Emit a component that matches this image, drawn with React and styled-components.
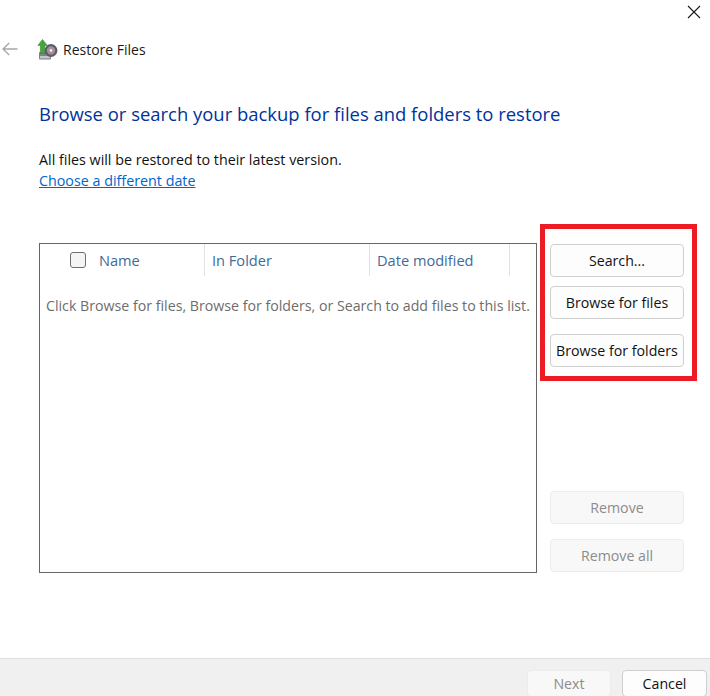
import React from "react";
import styled, { createGlobalStyle } from "styled-components";

const Global = createGlobalStyle`
  html, body { margin: 0; padding: 0; background: #fff; }
  body { font-family: "Open Sans", "Noto Sans", "Liberation Sans", sans-serif; }
`;

const Dialog = styled.div`
  width: 710px;
  height: 696px;
  display: flex;
  flex-direction: column;
  overflow: hidden;
  background: #fff;
  position: relative;
`;

const CloseButton = styled.div`
  position: absolute;
  top: 5px;
  right: 9px;
  width: 14px;
  height: 14px;
  display: flex;
`;

const Main = styled.div`
  flex: 1;
  display: flex;
  flex-direction: column;
  min-height: 0;
`;

const TitleBar = styled.div`
  display: flex;
  align-items: center;
  height: 24px;
  margin-top: 37px;
  padding-left: 2px;
`;

const BackIcon = styled.svg`
  width: 16px;
  height: 14px;
  margin-right: 19px;
`;

const AppIcon = styled.svg`
  width: 21px;
  height: 21px;
  margin-right: 5px;
`;

const TitleText = styled.span`
  font-size: 14px;
  color: #1a1a1a;
`;

const Heading = styled.h1`
  margin: 40px 0 0 39px;
  font-size: 18.46px;
  line-height: 26px;
  font-weight: 400;
  color: #003399;
`;

const Note = styled.p`
  margin: 23px 0 0 39px;
  font-size: 14.3px;
  line-height: 20px;
  color: #111;
`;

const DateLink = styled.a`
  display: block;
  margin-left: 39px;
  width: max-content;
  font-size: 14.3px;
  line-height: 21px;
  color: #0066cc;
  text-decoration: underline;
`;

const Workspace = styled.div`
  display: flex;
  align-items: flex-start;
  margin-top: 33px;
  padding-left: 39px;
`;

const FileList = styled.div`
  width: 498px;
  height: 330px;
  box-sizing: border-box;
  margin-top: 19px;
  border: 1px solid #666;
`;

const Header = styled.div`
  display: flex;
  height: 32px;
`;

const HeaderCell = styled.div`
  display: flex;
  align-items: center;
  box-sizing: border-box;
  width: ${(p) => p.$width}px;
  padding-left: ${(p) => p.$pad}px;
  border-right: 1px solid #e3e3e3;
  font-size: 14.6px;
  color: #3f6a97;
`;

const CheckBox = styled.span`
  display: inline-block;
  box-sizing: border-box;
  width: 16px;
  height: 16px;
  margin-right: 13px;
  border: 1px solid #6e6e6e;
  border-radius: 3px;
  background: #f4f4f4;
`;

const EmptyHint = styled.div`
  margin: 20px 0 0 6px;
  white-space: nowrap;
  font-size: 14.2px;
  line-height: 20px;
  color: #6d6d6d;
`;

const SideColumn = styled.div`
  display: flex;
  flex-direction: column;
  align-items: flex-start;
  margin-left: 3px;
`;

const Highlight = styled.div`
  box-sizing: border-box;
  width: 157px;
  height: 157px;
  padding: 15px 0 0 5px;
  border: 5px solid #ed1c24;
  display: flex;
  flex-direction: column;
`;

const DialogButton = styled.button`
  box-sizing: border-box;
  flex: none;
  width: ${(p) => p.$width || 134}px;
  height: ${(p) => p.$height || 33}px;
  margin-top: ${(p) => p.$top || 0}px;
  margin-left: ${(p) => p.$left || 0}px;
  padding: 0;
  border-radius: 4px;
  border: 1px solid ${(p) => (p.disabled ? "#ececec" : "#cfcfcf")};
  background: ${(p) => (p.disabled ? "#f8f8f8" : "#fdfdfd")};
  color: ${(p) => (p.disabled ? "#8c8c8c" : "#111")};
  font-family: inherit;
  font-size: 14.2px;
`;

const Footer = styled.div`
  flex: none;
  height: 38px;
  box-sizing: border-box;
  display: flex;
  justify-content: flex-end;
  padding: 11px 3px 0 0;
  background: #f0f0f0;
  border-top: 1px solid #dfdfdf;
`;

const App = () => (
  <Dialog>
    <Global />
    <CloseButton>
      <svg width="14" height="14" viewBox="0 0 14 14" fill="none" stroke="#1a1a1a" strokeWidth="1.1">
        <path d="M1 1 L13 13 M13 1 L1 13" />
      </svg>
    </CloseButton>
    <Main>
      <TitleBar>
        <BackIcon viewBox="0 0 16 14" fill="none" stroke="#a6a6a6" strokeWidth="1.3">
          <path d="M15.5 7 H1 M7.2 1 L1 7 L7.2 13" />
        </BackIcon>
        <AppIcon viewBox="0 0 21 21">
          <rect x="2" y="13" width="12" height="7.5" rx="1" fill="#7f8388" />
          <rect x="3" y="17" width="10" height="2.4" fill="#c3c6ca" />
          <circle cx="14" cy="11.5" r="6.4" fill="#5e5a6a" />
          <circle cx="14" cy="11.5" r="4.2" fill="#a98c99" />
          <circle cx="14" cy="11.5" r="1.4" fill="#ecebef" />
          <path d="M5.5 0.5 L10.4 6.4 H7.8 V14.5 H3.4 V6.4 H0.8 Z" fill="#45a53a" stroke="#2c7a26" strokeWidth="0.5" />
        </AppIcon>
        <TitleText>Restore Files</TitleText>
      </TitleBar>
      <Heading>Browse or search your backup for files and folders to restore</Heading>
      <Note>All files will be restored to their latest version.</Note>
      <DateLink>Choose a different date</DateLink>
      <Workspace>
        <FileList>
          <Header>
            <HeaderCell $width={165} $pad={30}>
              <CheckBox />
              Name
            </HeaderCell>
            <HeaderCell $width={165} $pad={7}>In Folder</HeaderCell>
            <HeaderCell $width={140} $pad={7}>Date modified</HeaderCell>
          </Header>
          <EmptyHint>Click Browse for files, Browse for folders, or Search to add files to this list.</EmptyHint>
        </FileList>
        <SideColumn>
          <Highlight>
            <DialogButton>Search...</DialogButton>
            <DialogButton $top={9}>Browse for files</DialogButton>
            <DialogButton $top={15}>Browse for folders</DialogButton>
          </Highlight>
          <DialogButton disabled $top={110} $left={10}>Remove</DialogButton>
          <DialogButton disabled $top={15} $left={10}>Remove all</DialogButton>
        </SideColumn>
      </Workspace>
    </Main>
    <Footer>
      <DialogButton disabled $width={84} $height={27}>Next</DialogButton>
      <DialogButton $width={85} $height={27} $left={11}>Cancel</DialogButton>
    </Footer>
  </Dialog>
);

export default App;
